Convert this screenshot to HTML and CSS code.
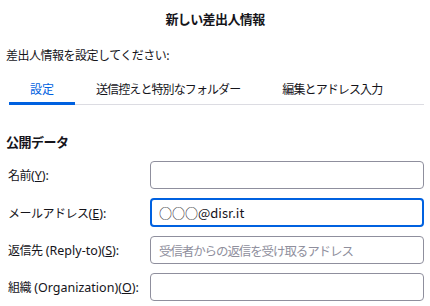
FILE: index.html
```html
<!DOCTYPE html>
<html lang="ja">
<head>
  <meta charset="UTF-8" />
  <title>新しい差出人情報</title>
  <link rel="stylesheet" href="styles.css">
</head>
<body>
  <main class="dialog">
    <h1 class="title">新しい差出人情報</h1>
    <p class="intro">差出人情報を設定してください:</p>
    <nav class="tabs">
      <span class="tab active">設定</span>
      <span class="tab">送信控えと特別なフォルダー</span>
      <span class="tab">編集とアドレス入力</span>
    </nav>
    <h2 class="section">公開データ</h2>
    <form class="fields">
      <label for="name">名前<span class="latin">(<u>Y</u>):</span></label>
      <input type="text" id="name">

      <label for="email">メールアドレス<span class="latin">(<u>E</u>):</span></label>
      <input type="text" id="email" class="focused" value="○○○@disr.it">

      <label for="reply">返信先<span class="latin"> (Reply-to)(<u>S</u>):</span></label>
      <input type="text" id="reply" class="hint" placeholder="受信者からの返信を受け取るアドレス">

      <label for="org">組織<span class="latin"> (Organization)(<u>O</u>):</span></label>
      <input type="text" id="org">
    </form>
  </main>
</body>
</html>
```

FILE: styles.css
```css
body { margin: 0; background: #fff; color: #15141a; font-family: "Noto Sans CJK JP", "Noto Sans", sans-serif; font-size: 12px; letter-spacing: -0.5px; }
.dialog { padding: 0 6px; }
.title { margin: 0; padding-top: 9px; text-align: center; font-size: 13px; font-weight: bold; line-height: 20px; letter-spacing: -0.6px; }
.intro { margin: 16px 0 0; line-height: 20px; }
.tabs {
  display: flex;
  margin: 14px 0 0 3px;
  border-bottom: 1px solid #dcdce2;
}
.tab {
  flex-shrink: 0;
  white-space: nowrap;
  padding: 0 21px 3px;
  line-height: 20px;
  letter-spacing: -0.9px;
  border-bottom: 3px solid transparent;
  margin-bottom: -1px;
}
.tab.active { color: #0061e0; border-bottom-color: #0061e0; letter-spacing: 0; }
.section { margin: 27px 0 0; font-size: 13px; font-weight: bold; line-height: 20px; }
.fields {
  display: grid;
  grid-template-columns: 144px 1fr;
  row-gap: 9px;
  align-items: center;
  margin-top: 9px;
}
.fields label { padding-left: 2px; white-space: nowrap; }
.latin { font-family: "Noto Sans", sans-serif; font-size: 12.5px; letter-spacing: 0; }
.fields input {
  box-sizing: border-box;
  height: 28px;
  border: 1px solid #8f8f9d;
  border-radius: 4px;
  padding: 0 8px;
  font: inherit;
  font-size: 13px;
  color: #15141a;
}
.fields input.hint { font-size: 12.5px; letter-spacing: -1.1px; }
.fields input::placeholder { color: #8f8f9d; }
.fields input.focused { border: 2px solid #0061e0; padding: 0 7px; height: 29px; outline: none; }
```
